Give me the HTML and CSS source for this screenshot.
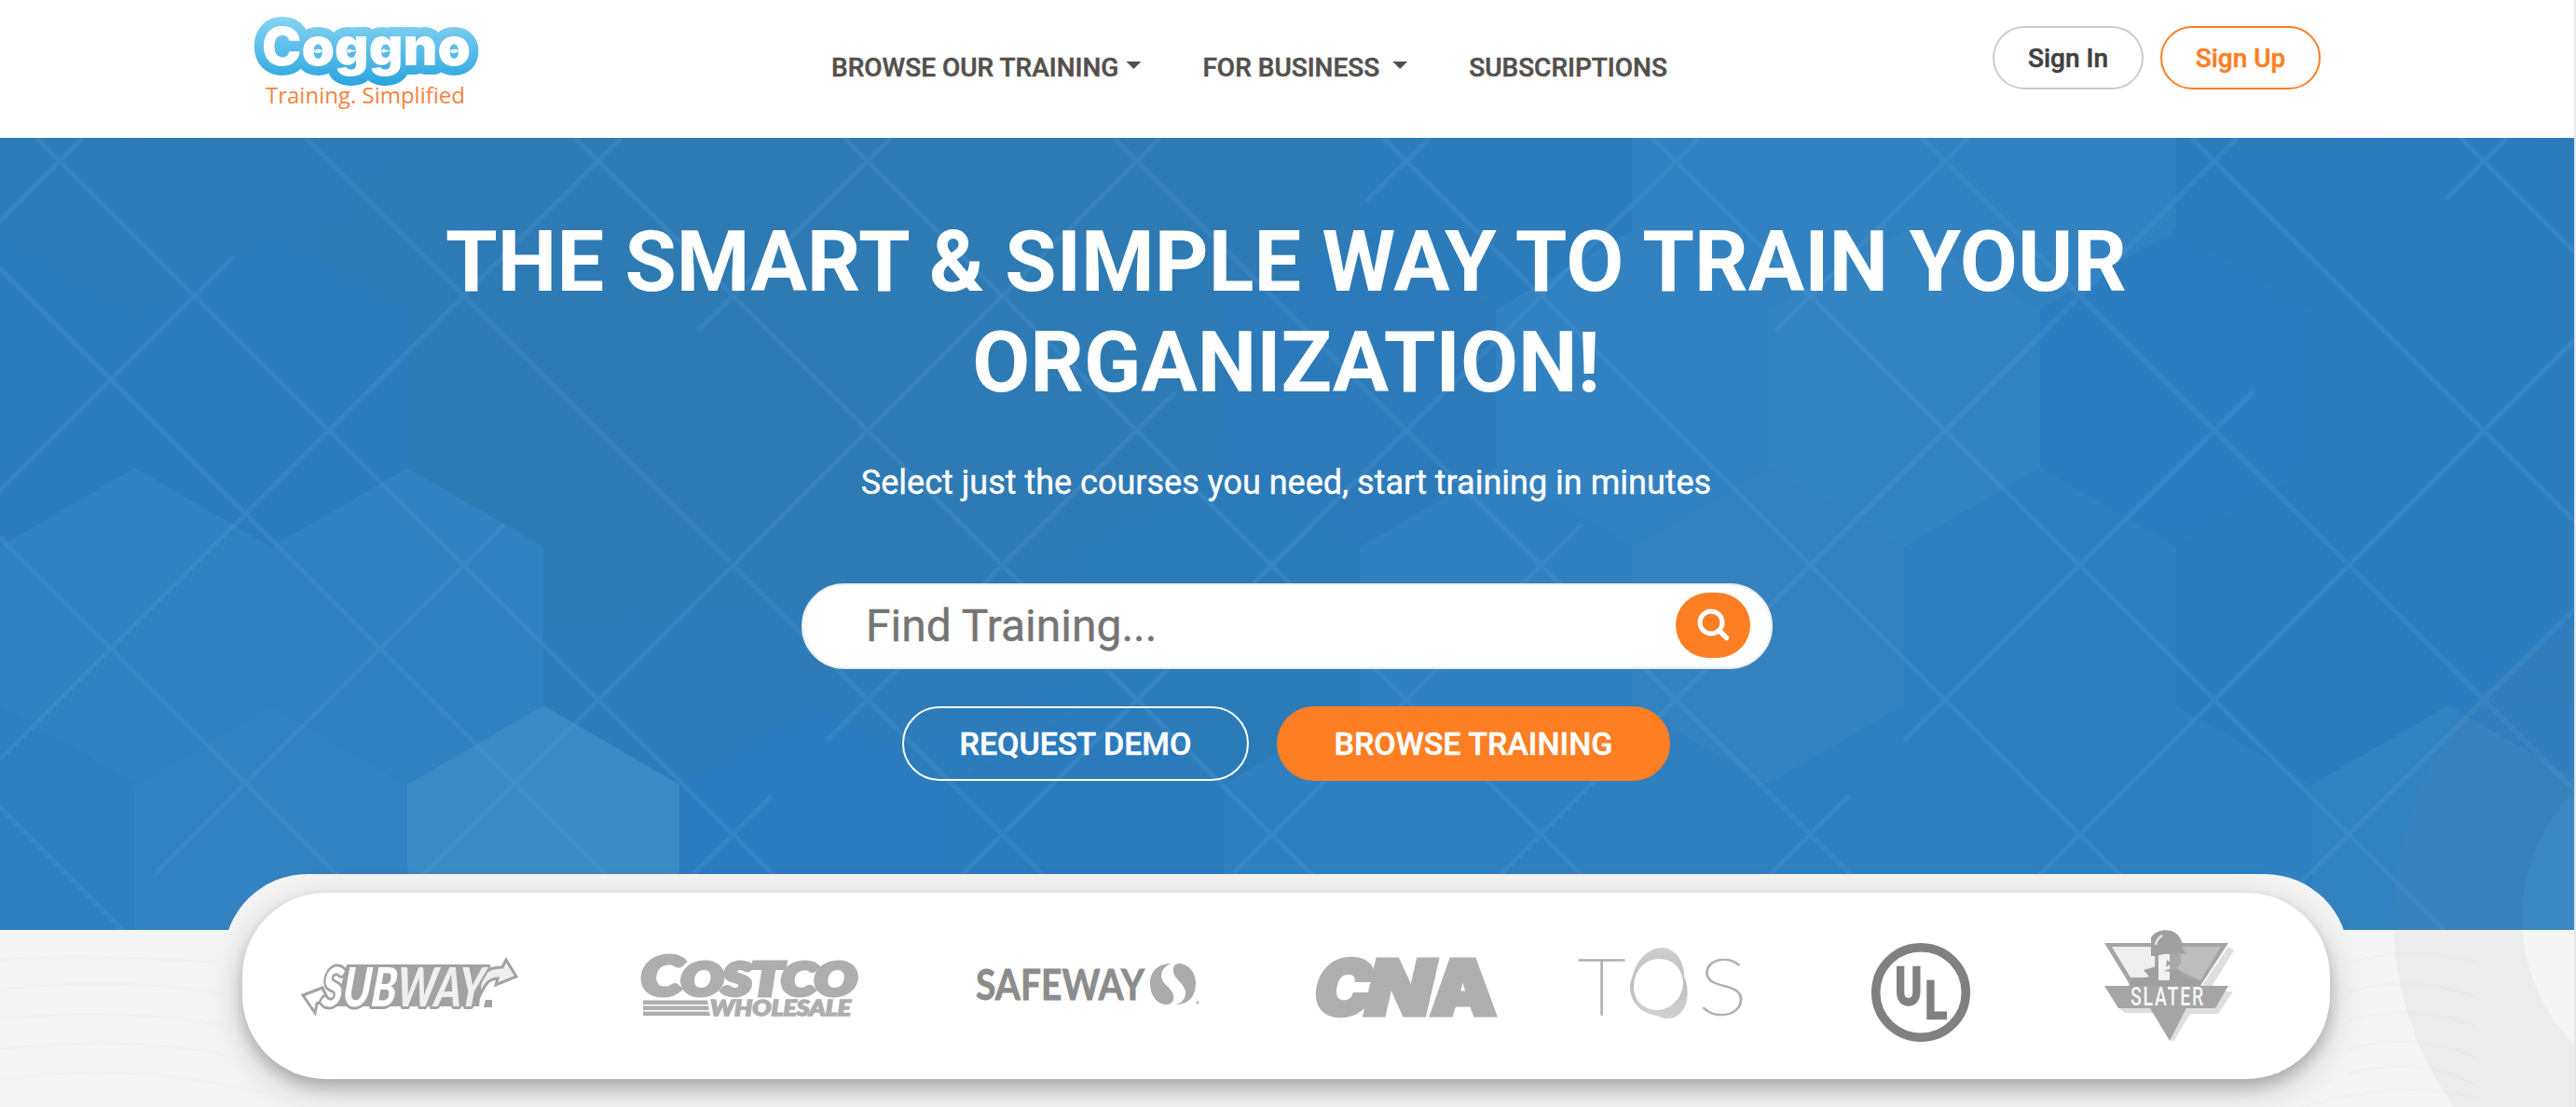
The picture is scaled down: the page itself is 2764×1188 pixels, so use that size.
FILE: index.html
```html
<!DOCTYPE html>
<html lang="en">
<head>
<meta charset="utf-8">
<title>Coggno - Training. Simplified</title>
<link rel="stylesheet" href="styles.css">
</head>
<body>
<div class="page">
  <header class="header">
    <a class="brand" href="#" aria-label="Coggno">
      <svg width="260" height="110" viewBox="264 10 260 110">
        <defs>
          <linearGradient id="brand-blue" gradientUnits="userSpaceOnUse" x1="0" y1="18" x2="0" y2="91">
            <stop offset="0" stop-color="#87d4f2"/><stop offset="1" stop-color="#2ba5df"/>
          </linearGradient>
        </defs>
        <text class="brand-name" x="281" y="69.500" textLength="224" lengthAdjust="spacingAndGlyphs">Coggno</text>
        <text class="brand-tag" x="285" y="111" textLength="214" lengthAdjust="spacingAndGlyphs">Training. Simplified</text>
      </svg>
    </a>
    <nav class="nav">
      <a class="nav-link" href="#"><span>BROWSE OUR TRAINING</span><i class="caret"></i></a>
      <a class="nav-link" href="#"><span>FOR BUSINESS</span><i class="caret caret-wide"></i></a>
      <a class="nav-link" href="#"><span>SUBSCRIPTIONS</span></a>
    </nav>
    <div class="account">
      <a class="pill pill-in" href="#">Sign In</a>
      <a class="pill pill-up" href="#">Sign Up</a>
    </div>
  </header>

  <section class="hero">
    <svg class="hero-art" width="2762" height="850" viewBox="0 148 2762 850" aria-hidden="true">
      <defs>
        <linearGradient id="sky" x1="0" y1="0" x2="1" y2="0.25">
          <stop offset="0" stop-color="#2d7bb9"/><stop offset=".3" stop-color="#2e7ab3"/><stop offset=".5" stop-color="#2e7ab4"/><stop offset=".62" stop-color="#2c7bba"/><stop offset="1" stop-color="#2c7cbd"/>
        </linearGradient>
        <linearGradient id="depth" x1="0" y1="0" x2="0" y2="1">
          <stop offset=".45" stop-color="#2c7ec4" stop-opacity="0"/><stop offset="1" stop-color="#2c7ec4" stop-opacity=".6"/>
        </linearGradient>
        <polygon id="hex" points="0,-170 146,-85 146,85 0,170 -146,85 -146,-85"/>
      </defs>
      <rect x="0" y="148" width="2762" height="850" fill="url(#sky)"/>
      <rect x="0" y="148" width="2762" height="850" fill="url(#depth)"/>
      <g>
        <use href="#hex" x="1605" y="162" fill="#2c7bbb"/>
        <use href="#hex" x="1897" y="162" fill="#3282c1"/>
        <use href="#hex" x="2189" y="162" fill="#3282c1"/>
        <use href="#hex" x="-1" y="417" fill="#2c7bbb"/>
        <use href="#hex" x="291" y="417" fill="#2c7bbb"/>
        <use href="#hex" x="1459" y="417" fill="#2c7aba"/>
        <use href="#hex" x="1751" y="417" fill="#3282c1"/>
        <use href="#hex" x="2043" y="417" fill="#3584c2"/>
        <use href="#hex" x="2335" y="417" fill="#2c7dc0"/>
        <use href="#hex" x="145" y="672" fill="#3282c1"/>
        <use href="#hex" x="437" y="672" fill="#3281c0"/>
        <use href="#hex" x="1313" y="672" fill="#2c7bb9"/>
        <use href="#hex" x="1605" y="672" fill="#3180c0"/>
        <use href="#hex" x="1897" y="672" fill="#3483c0"/>
        <use href="#hex" x="2189" y="672" fill="#2f80c0"/>
        <use href="#hex" x="2481" y="672" fill="#2c7cbd"/>
        <use href="#hex" x="-1" y="927" fill="#3080c0"/>
        <use href="#hex" x="291" y="927" fill="#3382c1"/>
        <use href="#hex" x="583" y="927" fill="#3c8bc5"/>
        <use href="#hex" x="875" y="927" fill="#2b7bbe"/>
        <use href="#hex" x="1167" y="927" fill="#2b7bbc"/>
        <use href="#hex" x="1459" y="927" fill="#2f80c0"/>
        <use href="#hex" x="1751" y="927" fill="#3080c0"/>
        <use href="#hex" x="2043" y="927" fill="#2f80c1"/>
        <use href="#hex" x="2335" y="927" fill="#2f80c1"/>
        <use href="#hex" x="2627" y="927" fill="#3383c1"/>
      </g>
      <path class="lattice" d="M-109 468L421 998M-109 179L710 998M39 148L889 998M328 148L1178 998M617 148L1467 998M906 148L1756 998M1195 148L2045 998M1484 148L2334 998M1773 148L2623 998M2062 148L2912 998M2351 148L3201 998M2640 148L3490 998M-109 757L132 998
        M89 148L-20 257M251 275L-20 546M667 148L0 815M956 148L749 355M542 562L167 937M1245 148L395 998M1534 148L1466 216M1261 421L887 795M828 854L684 998M1823 148L973 998M2112 148L1905 355M1698 562L1323 937M2401 148L1551 998M2690 148L2625 213M2418 420L2043 795M1984 854L1840 998M2800 327L2129 998M2800 616L2418 998M2704 712L2479 937"/>
    </svg>

    <div class="hero-body">
      <h1 class="title"><span>THE SMART &amp; SIMPLE WAY TO TRAIN YOUR</span><br><span>ORGANIZATION!</span></h1>
      <p class="subtitle">Select just the courses you need, start training in minutes</p>
      <form class="search">
        <input class="search-input" type="text" placeholder="Find Training...">
        <button class="search-button" type="button" aria-label="Search">
          <svg width="36" height="36" viewBox="0 0 36 36" fill="none" stroke="#fff" stroke-linecap="round">
            <circle cx="16" cy="15" r="12" stroke-width="5"/><path d="M25 24l7.500 7.500" stroke-width="5.500"/>
          </svg>
        </button>
      </form>
      <div class="actions">
        <a class="action action-demo" href="#">REQUEST DEMO</a>
        <a class="action action-browse" href="#">BROWSE TRAINING</a>
      </div>
    </div>
  </section>

  <section class="clients">
    <svg class="waves" width="2762" height="190" viewBox="0 998 2762 190" aria-hidden="true">
      <path d="M0 1030q90-8 240 4M0 1062q120-14 240 4M0 1094q120-14 240 6M0 1126q140-16 250 8M0 1158q150-18 280 14
        M2515 1036q60-24 140-4M2515 1067q60-24 140 2M2515 1098q60-24 140 2M2510 1130q70-26 146 4M2490 1162q90-36 166 2M2470 1188q100-30 190-10"/>
    </svg>
    <div class="clients-frame">
      <div class="clients-card">
        <svg width="240" height="120" viewBox="322 998 240 120">
          <g stroke="#a2a2a2" stroke-width="3" stroke-linejoin="miter">
            <path fill="#fff" d="M325 1068L346 1060L352 1073L340 1077L338 1087Z"/>
            <path fill="#efefef" d="M512 1074C520 1058 522 1051 534 1050L532 1057L554 1048L543 1030L539 1038C526 1038 519 1042 510 1056Z"/>
          </g>
          <path d="M372 1035H519L514 1080H360Z" fill="#a2a2a2"/>
          <text class="subway" transform="translate(344 1080) skewX(-5)" textLength="174" lengthAdjust="spacingAndGlyphs"><tspan fill="#fff">SUB</tspan><tspan fill="#efefef">WAY</tspan></text>
          <path d="M521 1073h7v8h-9Z" fill="#a2a2a2"/>
        </svg>
        <svg width="240" height="120" viewBox="686 998 240 120" fill="#aeaeae">
          <text class="costco-c" x="688" y="1068" textLength="44" lengthAdjust="spacingAndGlyphs">C</text>
          <text class="costco" x="731" y="1068" textLength="188" lengthAdjust="spacingAndGlyphs">OSTCO</text>
          <path d="M690 1073.500h69l1 4.500h-70zM690 1079.500h70l1 4.500h-71zM690 1085.500h71l1 4.500h-72z"/>
          <text class="wholesale" x="762" y="1089.500" textLength="151" lengthAdjust="spacingAndGlyphs">WHOLESALE</text>
        </svg>
        <svg width="244" height="120" viewBox="1045 998 244 120">
          <text class="safeway" x="1047" y="1072.500" textLength="181" lengthAdjust="spacingAndGlyphs">SAFEWAY</text>
          <g fill="#ababab">
            <path d="M1256 1034C1242 1034 1234 1043 1234 1055C1234 1069 1242 1078 1252 1078C1259 1077 1261 1071 1258 1065C1255 1059 1247 1056 1246 1048C1246 1041 1250 1037 1256 1034Z"/>
            <path d="M1264 1034C1276 1034 1283 1044 1283 1055C1283 1070 1275 1078 1262 1078C1269 1076 1272 1071 1272 1065C1271 1055 1260 1051 1259 1043C1258 1038 1260 1035 1264 1034Z"/>
            <circle cx="1285" cy="1076" r="1.500"/>
          </g>
        </svg>
        <svg width="200" height="120" viewBox="1410 998 200 120" fill="#afafaf" stroke="#afafaf">
          <g class="cna">
            <text transform="translate(1407 1088.500) skewX(-10)" textLength="62" lengthAdjust="spacingAndGlyphs">C</text>
            <text transform="translate(1461 1088.500) skewX(-13)" textLength="71" lengthAdjust="spacingAndGlyphs">N</text>
            <text x="1535" y="1088.500" textLength="70" lengthAdjust="spacingAndGlyphs">A</text>
          </g>
        </svg>
        <svg width="180" height="120" viewBox="1693 998 180 120" fill="#b0b0b0">
          <defs>
            <linearGradient id="ring" x1="0" y1="0" x2="0" y2="1"><stop offset="0" stop-color="#cfcfcf"/><stop offset=".5" stop-color="#bdbdbd"/><stop offset="1" stop-color="#d2d2d2"/></linearGradient>
          </defs>
          <text class="tos" x="1693" y="1089" textLength="51" lengthAdjust="spacingAndGlyphs">T</text>
          <path fill="url(#ring)" fill-rule="evenodd" d="M1783 1017C1797 1017 1808 1032 1807 1048C1815 1066 1810 1093 1789 1093C1783 1093 1782 1091 1778 1090C1756 1088 1744 1066 1751 1050C1756 1030 1767 1018 1783 1017ZM1780 1029C1765 1029 1753 1042 1753 1059C1753 1075 1765 1084 1778 1084C1792 1084 1806 1071 1806 1054C1805 1040 1796 1029 1780 1029Z"/>
          <text class="tos" x="1822" y="1089" textLength="53" lengthAdjust="spacingAndGlyphs">S</text>
        </svg>
        <svg width="110" height="120" viewBox="2006 998 110 120">
          <circle cx="2061" cy="1065" r="48.300" fill="none" stroke="#808080" stroke-width="9.500"/>
          <text class="ul" x="2033.500" y="1077.500" textLength="28.500" lengthAdjust="spacingAndGlyphs">U</text>
          <text class="ul" x="2065.500" y="1093" textLength="23.500" lengthAdjust="spacingAndGlyphs">L</text>
        </svg>
        <svg width="142" height="128" viewBox="2256 994 142 128">
          <path fill="#dedede" d="M2391 1016L2397 1020L2370 1064H2396L2380 1088H2350L2332 1118L2326 1112ZM2274 1082H2310V1087H2280Z"/>
          <path fill="#a5a5a5" d="M2258 1012H2391L2361 1058H2391L2377 1082H2346L2328 1117L2307 1082H2273L2258 1058H2286Z"/>
          <path fill="#efefef" d="M2266 1016H2312V1049H2286Z"/>
          <path fill="#bdbdbd" d="M2338 1016H2383L2361 1052L2334 1040Z"/>
          <path fill="#9f9f9f" d="M2284 1058L2288 1052L2306 1048L2300 1041L2314 1037H2331L2343 1044L2340 1048L2362 1053L2361 1058Z"/>
          <path fill="#f2f2f2" d="M2316 1024H2328V1052H2316Z"/>
          <path fill="#a5a5a5" d="M2325 1030L2330 1034L2324 1038ZM2322 1042L2330 1039V1043Z"/>
          <path fill="#a9a9a9" d="M2328 1024H2340V1034L2334 1041L2328 1040Z"/>
          <path fill="#a0a0a0" d="M2308 1025V1006C2312 999 2322 997 2330 999C2338 1002 2342 1009 2342 1018L2346 1024L2328 1022L2314 1026L2308 1026Z"/>
          <path fill="none" stroke="#e8e8e8" stroke-width="2.500" d="M2313 1014C2314 1009 2316 1006 2320 1004"/>
          <text class="slater" transform="translate(2286 1079) scale(.72 1)">SLATER</text>
        </svg>
      </div>
    </div>
  </section>

  <!-- translucent rings that straddle the hero and the clients strip -->
  <svg class="rings" width="200" height="540" viewBox="2562 648 200 540" aria-hidden="true">
    <path fill="#858585" fill-opacity=".065" fill-rule="evenodd" d="M2568 985a349 349 0 1 0 698 0a349 349 0 1 0-698 0ZM2706 985a193 193 0 1 0 386 0a193 193 0 1 0-386 0Z"/>
    <circle cx="2899" cy="985" r="193" fill="#f5f5f5" fill-opacity=".045"/>
  </svg>
</div>
</body>
</html>
```
FILE: styles.css
```css
* { box-sizing: border-box; }

body {
  margin: 0;
  background: #e8e8e8;
  font-family: Roboto, "Liberation Sans", sans-serif;
}

a { color: inherit; text-decoration: none; }

svg { display: block; overflow: visible; }

.page {
  position: relative;
  width: 2762px;
  height: 1188px;
  overflow: hidden;
  background: #f5f5f5;
}

/* Header */
.header {
  display: flex;
  align-items: flex-start;
  height: 148px;
  padding-left: 264px;
  background: #fff;
}

.brand { width: 260px; margin-right: 368px; padding-top: 10px; }
.brand-name {
  font: 900 56px Inter, "Liberation Sans", sans-serif;
  fill: #fff;
  stroke: url(#brand-blue);
  stroke-width: 20px;
  stroke-linejoin: round;
  paint-order: stroke;
}
.brand-tag { font: 400 24.5px "Open Sans", sans-serif; fill: #f5833f; }

.nav {
  display: flex;
  width: 1246px;
  padding-top: 52px;
  color: #54504d;
  font-size: 28px;
  font-weight: 500;
  line-height: 42px;
  white-space: nowrap;
}
.nav, .account, .actions { -webkit-text-stroke: .5px currentColor; }
.nav-link { display: flex; margin-right: 66px; }
.caret {
  width: 16px;
  height: 8px;
  margin: 14px 0 0 8px;
  background: currentColor;
  clip-path: polygon(0 0, 100% 0, 50% 100%);
}
.caret-wide { margin-left: 14px; }

.account { display: flex; gap: 18px; padding-top: 28px; }
.pill {
  height: 68px;
  border: 2px solid #ccc;
  border-radius: 34px;
  color: #404040;
  font-size: 28px;
  font-weight: 500;
  line-height: 65px;
  text-align: center;
}
.pill-in { width: 162px; }
.pill-up { width: 172px; border-color: #fd7e23; color: #fd7e23; }

/* Hero */
.hero { position: relative; height: 850px; }
.hero-art { position: absolute; inset: 0; overflow: hidden; }
.lattice { fill: none; stroke: #64aee6; stroke-width: 5; stroke-opacity: .17; }
.hero-body {
  position: relative;
  display: flex;
  flex-direction: column;
  align-items: center;
  padding-top: 80px;
  color: #fff;
}
.title {
  margin: 0 2px 0 0;
  font-size: 90px;
  font-weight: 700;
  line-height: 108px;
  text-align: center;
  white-space: nowrap;
}
.subtitle {
  margin: 47px 2px 0 0;
  font-size: 36px;
  line-height: 54px;
  -webkit-text-stroke: .4px currentColor;
}

.search {
  display: flex;
  align-items: flex-start;
  width: 1042px;
  height: 92px;
  margin-top: 81px;
  padding: 8px 22px 0 67px;
  border: 2px solid #eee;
  border-radius: 46px;
  background: #fff;
}
.search-input {
  flex: 1;
  height: 70px;
  padding: 0;
  border: 0;
  outline: 0;
  background: none;
  font-family: inherit;
  font-size: 48px;
}
.search-input::placeholder { color: #757575; opacity: 1; -webkit-text-stroke: .4px #757575; }
.search-button {
  display: flex;
  align-items: center;
  justify-content: center;
  width: 80px;
  height: 70px;
  padding: 0;
  border: 0;
  border-radius: 35px;
  background: #fd7e23;
}

.actions { display: flex; gap: 30px; margin-top: 40px; margin-right: 2px; }
.action {
  height: 80px;
  border: 2px solid #fff;
  border-radius: 40px;
  font-size: 34px;
  font-weight: 500;
  line-height: 77px;
  text-align: center;
}
.action-demo { width: 372px; }
.action-browse { width: 422px; border-color: #fd7e23; background: #fd7e23; }

/* Clients */
.clients { position: relative; height: 190px; }
.waves { position: absolute; inset: 0; fill: none; stroke: #f1f1f1; stroke-width: 2.5; }
.clients-frame {
  position: relative;
  width: 2280px;
  margin: -60px 0 0 240px;
  padding: 20px 20px 0;
  border-radius: 90px 90px 0 0;
  background: #f5f5f5;
  float: left;
}
.clients-card {
  display: grid;
  grid-template-columns: 364px 359px 365px 283px 313px 250px 142px;
  align-items: center;
  height: 200px;
  padding-left: 62px;
  border-radius: 90px;
  background: #fff;
  box-shadow: 0 8px 16px rgba(0, 0, 0, .2), 0 12px 40px rgba(0, 0, 0, .19);
}
.subway {
  font: italic 900 58px Lato, sans-serif;
  stroke: #a2a2a2;
  stroke-width: 6px;
  stroke-linejoin: round;
  paint-order: stroke;
}
.costco-c, .costco, .wholesale { font-family: Lato, sans-serif; font-style: italic; font-weight: 900; stroke: #aeaeae; }
.costco-c { font-size: 58px; stroke-width: 5px; }
.costco { font-size: 47px; stroke-width: 5px; }
.wholesale { font-size: 22px; stroke-width: 1.5px; }
.safeway { font: 700 45px Lato, sans-serif; fill: #8c8c8c; stroke: #8c8c8c; stroke-width: .8px; }
.cna { font: 900 81px Inter, sans-serif; stroke-width: 5px; }
.tos { font: 100 84px Lato, sans-serif; stroke: #b0b0b0; stroke-width: 1.4px; }
.ul { font: 700 56px Roboto, sans-serif; fill: #808080; stroke: #808080; stroke-width: 2.5px; }
.slater { font: 500 27px Roboto, sans-serif; letter-spacing: 2.5px; fill: #f7f7f7; }

.rings { position: absolute; right: 0; bottom: 0; overflow: hidden; }
```
